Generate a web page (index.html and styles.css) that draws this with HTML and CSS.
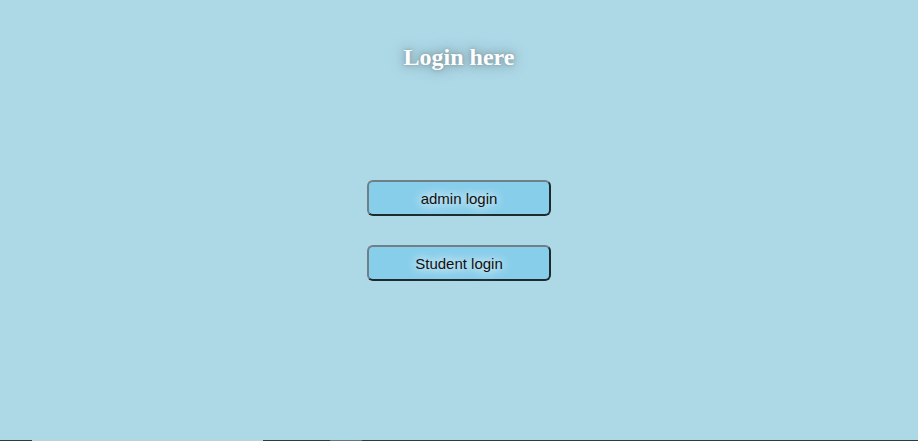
FILE: index.html
```html
<!DOCTYPE html>
<html lang="en">
<head>
<meta charset="utf-8">
<title>Login here</title>
<link rel="stylesheet" href="styles.css">
</head>
<body>
<div class="page">
  <main class="content">
    <h1 class="title">Login here</h1>
    <div class="buttons">
      <button class="btn">admin login</button>
      <button class="btn">Student login</button>
    </div>
  </main>
  <div class="bottom-strip">
    <span class="seg seg-a"></span>
    <span class="seg seg-b"></span>
    <span class="seg seg-c"></span>
    <span class="seg seg-d"></span>
    <span class="seg seg-e"></span>
  </div>
</div>
</body>
</html>
```

FILE: styles.css
```css
html, body {
  margin: 0;
  padding: 0;
  height: 100%;
}
body {
  background: #add8e6;
  font-family: "Liberation Sans", Arial, sans-serif;
}
.page {
  min-height: 100vh;
  display: flex;
  flex-direction: column;
}
.content {
  flex: 1;
  display: flex;
  flex-direction: column;
  align-items: center;
  padding-top: 43px;
}
.title {
  margin: 0;
  font-family: "Liberation Serif", "Times New Roman", serif;
  font-weight: bold;
  font-size: 24px;
  line-height: 28px;
  color: #ffffff;
  text-shadow: 0 0 16px #8aa5ae, 0 0 8px #7d98a1, 0 0 3px #8aa4ac;
}
.buttons {
  margin-top: 109px;
  display: flex;
  flex-direction: column;
  gap: 29px;
}
.btn {
  width: 184px;
  height: 36px;
  box-sizing: border-box;
  background: #87ceeb;
  border: 2px solid;
  border-color: #6f7f85 #1f2a2e #1f2a2e #6f7f85;
  border-radius: 6px;
  font-family: "Liberation Sans", Arial, sans-serif;
  font-size: 15px;
  color: #111;
  text-shadow: 0 0 14px #ffffff, 0 0 8px rgba(255, 255, 255, 0.9);
  padding: 0;
  cursor: pointer;
}
.bottom-strip {
  height: 1px;
  display: flex;
}
.seg { display: block; height: 1px; }
.seg-a { width: 32px; background: #2f3a3d; }
.seg-b { width: 231px; background: #c4cfd2; }
.seg-c { width: 67px; background: #2f3a3d; }
.seg-d { width: 32px; background: #6a7478; }
.seg-e { flex: 1; background: #2f3a3d; }
```
